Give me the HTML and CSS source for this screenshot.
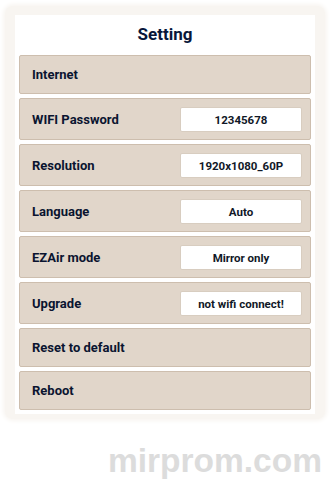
FILE: index.html
```html
<!DOCTYPE html>
<html lang="en">
<head>
<meta charset="utf-8">
<title>Setting</title>
<link rel="stylesheet" href="styles.css">
</head>
<body>
<div class="frame">
  <div class="panel">
    <h1 class="title">Setting</h1>
    <div class="list">
      <div class="row"><span class="label">Internet</span></div>
      <div class="row tall"><span class="label">WIFI Password</span><span class="value">12345678</span></div>
      <div class="row tall"><span class="label">Resolution</span><span class="value">1920x1080_60P</span></div>
      <div class="row tall"><span class="label">Language</span><span class="value">Auto</span></div>
      <div class="row tall"><span class="label">EZAir mode</span><span class="value">Mirror only</span></div>
      <div class="row tall"><span class="label">Upgrade</span><span class="value">not wifi connect!</span></div>
      <div class="row"><span class="label">Reset to default</span></div>
      <div class="row"><span class="label">Reboot</span></div>
    </div>
  </div>
</div>
<div class="watermark">mirprom.com</div>
</body>
</html>
```

FILE: styles.css
```css
html, body {
  margin: 0;
  padding: 0;
  background: #ffffff;
}
body {
  width: 330px;
  height: 486px;
  overflow: hidden;
  font-family: Roboto, "Liberation Sans", sans-serif;
}
.frame {
  margin: 6px 5px 0 5px;
  padding: 9px 10px 5px 10px;
  background: #f8f5f1;
  box-shadow: 0 0 4px 2px #f8f5f1;
  border-radius: 8px;
}
.panel {
  background: #ffffff;
  padding: 0 4px 4px 4px;
}
.title {
  margin: 0;
  height: 40px;
  line-height: 39px;
  text-align: center;
  font-size: 17px;
  font-weight: 700;
  color: #08163a;
}
.list {
  display: flex;
  flex-direction: column;
  gap: 4px;
}
.row {
  box-sizing: border-box;
  height: 39px;
  display: flex;
  align-items: center;
  justify-content: space-between;
  padding: 0 8px 0 12px;
  background: #e1d6ca;
  border: 1px solid #cdbeae;
  border-radius: 2px;
}
.row.tall {
  height: 42px;
}
.label {
  font-size: 13px;
  font-weight: 700;
  color: #0a1430;
}
.value {
  box-sizing: border-box;
  width: 122px;
  height: 25px;
  line-height: 25px;
  text-align: center;
  background: #ffffff;
  border: 1px solid #d8cdc0;
  border-radius: 2px;
  font-size: 11.5px;
  font-weight: 700;
  color: #111827;
}
.watermark {
  margin-top: 25px;
  padding-right: 8px;
  text-align: right;
  font-family: "Liberation Sans", Arial, sans-serif;
  font-weight: 700;
  font-size: 33.5px;
  line-height: 33px;
  color: #dcdcdc;
}
```
